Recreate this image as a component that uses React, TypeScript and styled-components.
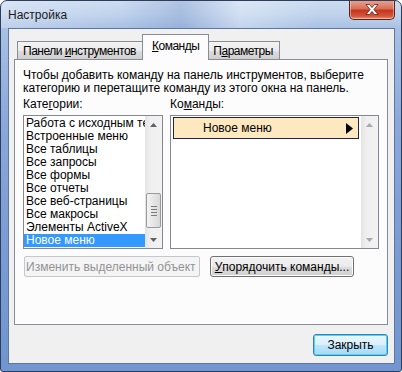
import React from 'react';
import styled, {createGlobalStyle} from 'styled-components';

const GlobalStyle = createGlobalStyle`
  html, body {
    margin: 0;
    padding: 0;
    background: #ffffff;
  }
  body {
    font-family: "Liberation Sans", Arial, sans-serif;
    font-size: 12px;
    color: #000;
  }
  * {
    box-sizing: border-box;
  }
`;

const categories = [
    'Работа с исходным текстом',
    'Встроенные меню',
    'Все таблицы',
    'Все запросы',
    'Все формы',
    'Все отчеты',
    'Все веб-страницы',
    'Все макросы',
    'Элементы ActiveX',
    'Новое меню',
];

const ArrowUp: React.FC<{color?: string}> = ({color = '#5f5f5f'}) => (
    <svg width="7" height="4" viewBox="0 0 7 4">
        <path d="M0 4 L3.5 0 L7 4 Z" fill={color}/>
    </svg>
);

const ArrowDown: React.FC<{color?: string}> = ({color = '#5f5f5f'}) => (
    <svg width="7" height="4" viewBox="0 0 7 4">
        <path d="M0 0 L7 0 L3.5 4 Z" fill={color}/>
    </svg>
);

const Scrollbar: React.FC<{thumb?: {top: number, height: number}, disabled?: boolean}> = ({thumb, disabled}) => {
    const arrowColor = disabled ? '#a8a8a8' : '#606060';
    return (
        <ScrollTrack>
            <ScrollButton><ArrowUp color={arrowColor}/></ScrollButton>
            <ScrollArea>
                {thumb && (
                    <Thumb style={{top: thumb.top, height: thumb.height}}>
                        <Grip/>
                        <Grip/>
                        <Grip/>
                        <Grip/>
                    </Thumb>
                )}
            </ScrollArea>
            <ScrollButton><ArrowDown color={arrowColor}/></ScrollButton>
        </ScrollTrack>
    );
};

export default function App() {
    return (
        <>
            <GlobalStyle/>
            <Window>
                <TitleBar>
                    <Title>Настройка</Title>
                    <CloseButton>
                        <svg width="14" height="11" viewBox="0 0 14 11">
                            <path d="M1 0.5 L4.5 0.5 L7 3.6 L9.5 0.5 L13 0.5 L8.9 5.5 L13 10.5 L9.5 10.5 L7 7.4 L4.5 10.5 L1 10.5 L5.1 5.5 Z"
                                  fill="#ffffff" stroke="#5a1d14" strokeWidth="0.8"/>
                        </svg>
                    </CloseButton>
                </TitleBar>
                <Client>
                    <TabStrip>
                        <Tab>Панели <u>и</u>нструментов</Tab>
                        <Tab selected><u>К</u>оманды</Tab>
                        <Tab>П<u>а</u>раметры</Tab>
                    </TabStrip>
                    <TabPanel>
                        <Description>
                            Чтобы добавить команду на панель инструментов, выберите<br/>
                            категорию и перетащите команду из этого окна на панель.
                        </Description>
                        <Columns>
                            <Column>
                                <Label>Кате<u>г</u>ории:</Label>
                                <ListBox>
                                    <ListItems>
                                        {categories.map((c, i) => (
                                            <CategoryItem key={i} selected={i === categories.length - 1}>{c}</CategoryItem>
                                        ))}
                                    </ListItems>
                                    <Scrollbar thumb={{top: 60, height: 35}}/>
                                </ListBox>
                            </Column>
                            <Column>
                                <Label>Ко<u>м</u>анды:</Label>
                                <ListBox>
                                    <CommandItems>
                                        <CommandItem>
                                            <span>Новое меню</span>
                                            <svg width="7" height="11" viewBox="0 0 7 11">
                                                <path d="M0 0 L7 5.5 L0 11 Z" fill="#000"/>
                                            </svg>
                                        </CommandItem>
                                    </CommandItems>
                                    <Scrollbar disabled/>
                                </ListBox>
                            </Column>
                        </Columns>
                        <ControlsRow>
                            <ComboDisabled>
                                <span>Изменить выделенный объект</span>
                                <ArrowDown color="#a9a9a9"/>
                            </ComboDisabled>
                            <PushButton width={144}><u>У</u>порядочить команды...</PushButton>
                        </ControlsRow>
                    </TabPanel>
                    <Footer>
                        <PushButton width={75} primary>Закрыть</PushButton>
                    </Footer>
                </Client>
            </Window>
        </>
    );
}

const Window = styled.div`
width: 402px;
height: 372px;
display: flex;
flex-direction: column;
border: 1px solid #2d3e5c;
border-radius: 7px 7px 3px 3px;
background: linear-gradient(180deg, #cddcf0 0px, #bed2ec 14px, #a9c1e4 27px, #8aa8da 120px, #7a9bd2 250px, #7095d0 372px);
overflow: hidden;
`;

const TitleBar = styled.div`
height: 27px;
flex: none;
display: flex;
align-items: flex-start;
justify-content: space-between;
padding-left: 7px;
background: linear-gradient(90deg, rgba(255,255,255,0.25) 0%, rgba(255,255,255,0) 30%, rgba(110,140,195,0.3) 45%, rgba(255,255,255,0.3) 60%, rgba(255,255,255,0) 80%);
`;

const Title = styled.div`
margin-top: 7px;
font-size: 12px;
color: #1a1a1a;
`;

const CloseButton = styled.div`
width: 46px;
height: 20px;
margin-right: 6px;
margin-top: -1px;
display: flex;
align-items: center;
justify-content: center;
border: 1px solid #5b2219;
border-top: none;
border-radius: 0 0 5px 5px;
background: linear-gradient(180deg, #e9a595 0%, #d8705a 45%, #c7361c 55%, #d2553a 85%, #e6947a 100%);
box-shadow: inset 0 0 0 1px rgba(255, 220, 210, 0.5);
`;

const Client = styled.div`
flex: 1;
margin: 0 6px 7px 7px;
border: 1px solid #5d779e;
background: #f0f0f0;
display: flex;
flex-direction: column;
`;

const TabStrip = styled.div`
display: flex;
align-items: flex-end;
height: 31px;
padding-left: 8px;
position: relative;
z-index: 1;
margin-bottom: -1px;
`;

const Tab = styled.div<{selected?: boolean}>`
height: ${p => p.selected ? 26 : 19}px;
padding: ${p => p.selected ? '3px 9px 0' : '1px 6px 0 5px'};
margin-left: ${p => p.selected ? -1 : 0}px;
margin-right: ${p => p.selected ? -1 : 0}px;
border: 1px solid #898c95;
border-bottom: ${p => p.selected ? 'none' : '1px solid #898c95'};
border-left: ${p => p.selected ? '1px solid #898c95' : 'none'};
background: ${p => p.selected ? '#fcfcfc' : 'linear-gradient(180deg, #f3f3f3 0%, #ebebeb 50%, #dddddd 51%, #cfcfcf 100%)'};
position: relative;
z-index: ${p => p.selected ? 2 : 1};
white-space: nowrap;
line-height: 16px;
letter-spacing: -0.5px;
&:first-child {
    border-left: 1px solid #898c95;
}
`;

const TabPanel = styled.div`
height: 266px;
margin: 0 6px 0 5px;
border: 1px solid #898c95;
background: #fcfcfc;
padding: 9px 7px 0 8px;
display: flex;
flex-direction: column;
`;

const Description = styled.div`
line-height: 13px;
white-space: nowrap;
`;

const Columns = styled.div`
display: grid;
grid-template-columns: 140px 209px;
column-gap: 7px;
margin-top: 3px;
`;

const Column = styled.div`
display: flex;
flex-direction: column;
`;

const Label = styled.div`
line-height: 13px;
height: 13px;
margin-bottom: 4px;
`;

const ListBox = styled.div`
height: 134px;
border: 1px solid #828790;
background: #ffffff;
display: flex;
overflow: hidden;
`;

const ListItems = styled.div`
flex: 1;
min-width: 0;
padding-top: 1px;
display: flex;
flex-direction: column;
`;

const CategoryItem = styled.div<{selected?: boolean}>`
height: 13px;
line-height: 13px;
padding-left: 2px;
white-space: nowrap;
overflow: hidden;
background: ${p => p.selected ? '#3399ff' : 'transparent'};
color: ${p => p.selected ? '#ffffff' : '#000000'};
`;

const CommandItems = styled.div`
flex: 1;
padding: 1px 2px 0 2px;
`;

const CommandItem = styled.div`
height: 22px;
display: flex;
align-items: center;
justify-content: space-between;
padding: 0 5px 0 29px;
border: 1px solid #23224a;
background: #fde8bf;
`;

const ScrollTrack = styled.div`
width: 17px;
flex: none;
display: flex;
flex-direction: column;
background: linear-gradient(90deg, #e3e3e3 0%, #efefef 30%, #f2f2f2 100%);
`;

const ScrollButton = styled.div`
height: 17px;
display: flex;
align-items: center;
justify-content: center;
`;

const ScrollArea = styled.div`
flex: 1;
position: relative;
`;

const Thumb = styled.div`
position: absolute;
left: 1px;
right: 1px;
border: 1px solid #9a9a9a;
border-radius: 2px;
background: linear-gradient(90deg, #f4f4f4 0%, #e6e6e6 50%, #d8d8d8 100%);
display: flex;
flex-direction: column;
align-items: center;
justify-content: center;
gap: 2px;
`;

const Grip = styled.div`
width: 6px;
height: 1px;
background: #7a7a7a;
`;

const ControlsRow = styled.div`
display: flex;
align-items: center;
gap: 10px;
margin-top: 7px;
padding-left: 1px;
`;

const ComboDisabled = styled.div`
width: 176px;
height: 21px;
display: flex;
align-items: center;
justify-content: space-between;
padding: 0 6px 0 1px;
border: 1px solid #c5c8cb;
border-radius: 2px;
background: #f4f4f4;
color: #939393;
white-space: nowrap;
`;

const PushButton = styled.div<{width: number, primary?: boolean}>`
width: ${p => p.width}px;
height: ${p => p.primary ? 22 : 21}px;
display: flex;
align-items: center;
justify-content: center;
border: 1px solid ${p => p.primary ? '#3c7fb1' : '#707070'};
border-radius: 3px;
background: ${p => p.primary
    ? 'linear-gradient(180deg, #eaf6fd 0%, #d9f0fc 50%, #bee6fd 51%, #a7d9f5 100%)'
    : 'linear-gradient(180deg, #f2f2f2 0%, #ebebeb 50%, #dddddd 51%, #cfcfcf 100%)'};
box-shadow: inset 0 0 0 1px ${p => p.primary ? '#48d7fb' : '#fcfcfc'};
white-space: nowrap;
`;

const Footer = styled.div`
display: flex;
justify-content: flex-end;
padding: 9px 6px 0 0;
`;
